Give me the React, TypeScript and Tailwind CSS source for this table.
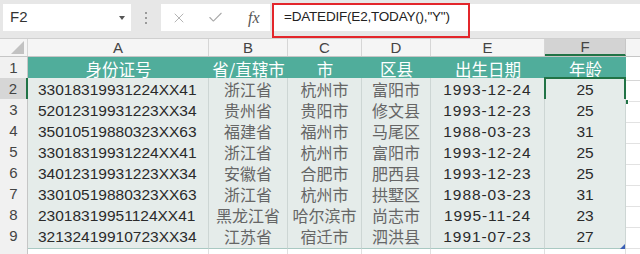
import { X, Check } from 'lucide-react';

const header = ['身份证号', '省/直辖市', '市', '区县', '出生日期', '年龄'];

const rows = [
  ['33018319931224XX41', '浙江省', '杭州市', '富阳市', '1993-12-24', '25'],
  ['52012319931223XX34', '贵州省', '贵阳市', '修文县', '1993-12-23', '25'],
  ['35010519880323XX63', '福建省', '福州市', '马尾区', '1988-03-23', '31'],
  ['33018319931224XX41', '浙江省', '杭州市', '富阳市', '1993-12-24', '25'],
  ['34012319931223XX34', '安徽省', '合肥市', '肥西县', '1993-12-23', '25'],
  ['33010519880323XX63', '浙江省', '杭州市', '拱墅区', '1988-03-23', '31'],
  ['23018319951124XX41', '黑龙江省', '哈尔滨市', '尚志市', '1995-11-24', '23'],
  ['32132419910723XX34', '江苏省', '宿迁市', '泗洪县', '1991-07-23', '27'],
];

const cols = 'grid grid-cols-[28px_181px_79px_74px_69px_114px_81px_1fr]';
const cjk = "font-['Noto_Sans_CJK_SC',sans-serif]";
const latin = "font-['Liberation_Sans','Noto_Sans_CJK_SC',sans-serif]";

export default function App() {
  return (
    <div className={`relative w-[640px] h-[254px] overflow-hidden bg-white ${latin}`}>
      {/* formula bar */}
      <div className="flex h-[39px] bg-[#e7e7e7] pt-[4px] border-b border-[#cfcfcf]">
        <div className="ml-[3px] w-[128px] h-[27px] bg-white flex items-center justify-between pl-[7px] pr-[6px]">
          <span className="text-[15px] text-[#333]">F2</span>
          <span className="w-0 h-0 border-x-[3px] border-x-transparent border-t-[4px] border-t-[#555]" />
        </div>
        <div className="w-[30px] flex flex-col items-center justify-center gap-[3px] h-[27px]">
          <span className="w-[2px] h-[2px] bg-[#9a9a9a]" />
          <span className="w-[2px] h-[2px] bg-[#9a9a9a]" />
          <span className="w-[2px] h-[2px] bg-[#9a9a9a]" />
        </div>
        <div className="w-[109px] h-[27px] bg-white flex items-center pl-[10px] gap-[20px]">
          <X size={16} strokeWidth={1.3} color="#a8a8a8" />
          <Check size={17} strokeWidth={1.5} color="#a8a8a8" />
          <span className="ml-[4px] font-['Liberation_Serif',serif] italic text-[16px] text-[#555]">fx</span>
        </div>
        <div className="flex-1 h-[27px] ml-[2px] bg-white flex items-center pl-[12px]">
          <span className="text-[13.5px] text-[#222] tracking-[-0.2px]">=DATEDIF(E2,TODAY(),"Y")</span>
        </div>
      </div>

      {/* column headers */}
      <div className={`${cols} h-[18px] bg-[#f5f5f5] border-b border-[#c6c6c6] text-[15px] text-[#444]`}>
        <div className="relative border-r border-[#d6d6d6]">
          <span className="absolute right-[3px] bottom-[2px] w-0 h-0 border-l-[13px] border-l-transparent border-b-[13px] border-b-[#c2c2c2]" />
        </div>
        {['A', 'B', 'C', 'D', 'E'].map((c) => (
          <div key={c} className="flex items-center justify-center border-r border-[#d6d6d6] leading-none">
            {c}
          </div>
        ))}
        <div className="flex items-center justify-center bg-[#d3d3d3] border-b-2 border-[#217346] border-r border-r-[#c6c6c6] leading-none">
          F
        </div>
        <div />
      </div>

      {/* header row */}
      <div className={`${cols} h-[21px]`}>
        <div className="flex items-center justify-center bg-[#f1f1f1] border-r border-[#c6c6c6] border-b border-b-[#d6d6d6] text-[15px] text-[#444]">
          1
        </div>
        {header.map((h) => (
          <div key={h} className={`flex items-center justify-center bg-[#50ad9b] text-white text-[16.5px] leading-none ${cjk}`}>
            {h}
          </div>
        ))}
        <div className="border-b border-[#d6d6d6]" />
      </div>

      {/* data rows */}
      {rows.map((r, i) => {
        const sel = i === 0;
        return (
          <div key={i} className={`${cols} h-[21px]`}>
            <div
              className={`flex items-center justify-center border-b border-[#d6d6d6] text-[15px] text-[#444] ${
                sel ? 'bg-[#d6d6d6] border-r-2 border-r-[#217346]' : 'bg-[#f1f1f1] border-r border-r-[#c6c6c6]'
              }`}
            >
              {i + 2}
            </div>
            {r.map((v, j) => {
              const isCjk = j >= 1 && j <= 3;
              return (
                <div
                  key={j}
                  className={`relative flex items-center bg-[#e5ecea] border-r border-b border-[#cdd6d4] leading-none ${
                    j === 0 ? 'pl-[10px]' : 'justify-center'
                  } ${isCjk ? `${cjk} text-[16px] text-[#666]` : 'text-[15.5px] text-[#2a2a2a]'} ${j === 4 ? 'tracking-[0.9px]' : ''} ${
                    i === rows.length - 1 ? 'border-b-[#a9c9c2]' : ''
                  }`}
                >
                  {v}
                  {sel && j === 5 && (
                    <>
                      <span className="absolute -left-px -top-px -right-px -bottom-px border-2 border-[#217346]" />
                      <span className="absolute -right-[4px] -bottom-[4px] w-[6px] h-[6px] bg-[#217346] border border-white" />
                    </>
                  )}
                  {i === rows.length - 1 && j === 5 && (
                    <span className="absolute right-0 bottom-[-1px] w-0 h-0 border-l-[5px] border-l-transparent border-b-[5px] border-b-[#3b5fb5]" />
                  )}
                </div>
              );
            })}
            <div className="border-b border-[#e2e2e2]" />
          </div>
        );
      })}

      {/* row 10 */}
      <div className={`${cols} h-[21px]`}>
        <div className="flex items-start justify-center pt-[2px] bg-[#f1f1f1] border-r border-[#c6c6c6] text-[15px] text-[#444]">
          10
        </div>
        {[0, 1, 2, 3, 4, 5].map((k) => (
          <div key={k} className="border-r border-[#e0e0e0]" />
        ))}
        <div />
      </div>

      {/* annotation box */}
      <div className="absolute left-[272px] top-[3px] w-[198px] h-[35px] border-2 border-[#e3262b]" />
    </div>
  );
}
